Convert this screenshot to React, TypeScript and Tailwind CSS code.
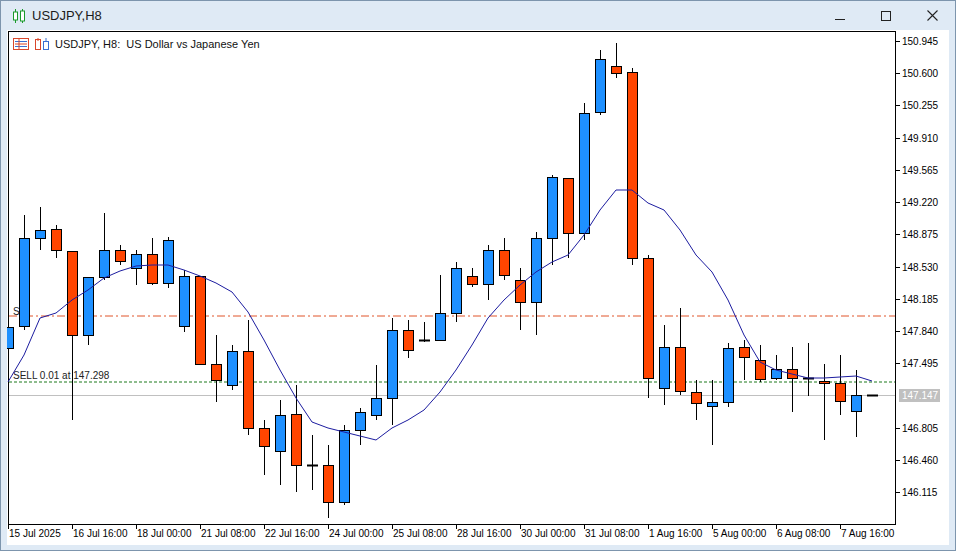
import React from "react";

type C = [number, string, number, number, number, number]; // x, color(b/r/d), bodyTop, bodyBot, wickTop, wickBot
const candles: C[] = [
  [8, "b", 327, 348, 320, 350],
  [24, "b", 238, 326, 215, 330],
  [40, "b", 230, 238, 207, 250],
  [56, "r", 229, 250, 225, 258],
  [72, "r", 251, 335, 251, 420],
  [88, "b", 277, 335, 277, 345],
  [104, "b", 250, 277, 213, 280],
  [120, "r", 250, 261, 245, 265],
  [136, "b", 254, 268, 250, 285],
  [152, "r", 254, 283, 238, 285],
  [168, "b", 240, 283, 237, 288],
  [184, "b", 276, 326, 270, 332],
  [200, "r", 276, 364, 276, 364],
  [216, "r", 364, 380, 335, 402],
  [232, "b", 351, 385, 345, 390],
  [248, "r", 351, 428, 320, 435],
  [264, "r", 428, 446, 420, 475],
  [280, "b", 415, 451, 400, 485],
  [296, "r", 414, 465, 385, 492],
  [312, "d", 465, 465, 435, 490],
  [328, "r", 465, 502, 445, 518],
  [344, "b", 430, 502, 425, 505],
  [360, "b", 412, 430, 408, 445],
  [376, "b", 398, 415, 365, 420],
  [392, "b", 330, 398, 318, 425],
  [408, "r", 330, 350, 320, 358],
  [424, "d", 340, 340, 322, 342],
  [440, "b", 313, 340, 275, 340],
  [456, "b", 268, 313, 262, 322],
  [472, "r", 276, 284, 268, 287],
  [488, "b", 250, 284, 245, 300],
  [504, "r", 250, 275, 238, 280],
  [520, "r", 280, 302, 268, 330],
  [536, "b", 238, 302, 232, 335],
  [552, "b", 177, 238, 175, 265],
  [568, "r", 178, 233, 178, 258],
  [584, "b", 113, 233, 103, 240],
  [600, "b", 59, 112, 50, 115],
  [616, "r", 66, 73, 43, 78],
  [632, "r", 72, 258, 68, 265],
  [648, "r", 258, 378, 255, 398],
  [664, "b", 347, 388, 325, 405],
  [680, "r", 347, 391, 308, 395],
  [696, "r", 392, 403, 380, 420],
  [712, "b", 402, 406, 380, 445],
  [728, "b", 348, 402, 343, 407],
  [744, "r", 347, 357, 340, 380],
  [760, "r", 360, 379, 345, 382],
  [776, "b", 369, 378, 355, 380],
  [792, "r", 369, 378, 347, 412],
  [808, "d", 378, 378, 343, 396],
  [824, "r", 381, 383, 364, 440],
  [840, "r", 383, 401, 355, 415],
  [856, "b", 395, 411, 370, 437],
  [872, "d", 395, 395, 395, 395],
];

const ma = "8,382 24,355 40,318 56,313 72,300 88,290 104,278 120,271 136,266 152,265 168,265 184,270 200,276 216,283 232,292 248,312 264,340 280,370 296,398 312,422 328,428 344,432 360,436 376,440 392,428 408,420 424,410 440,392 456,370 472,345 488,318 504,300 520,285 536,272 552,262 568,255 584,235 600,210 616,190 632,190 648,203 664,210 680,230 696,255 712,272 728,300 744,335 760,362 776,370 792,374 808,378 824,378 840,377 856,376 872,381";

const prices: [string, number][] = [
  ["150.945", 41], ["150.600", 73], ["150.255", 105], ["149.910", 138], ["149.565", 170],
  ["149.220", 202], ["148.875", 234], ["148.530", 267], ["148.185", 299], ["147.840", 331],
  ["147.495", 363], ["146.805", 428], ["146.460", 460], ["146.115", 492],
];
const dates: [string, number][] = [
  ["15 Jul 2025", 8], ["16 Jul 16:00", 72], ["18 Jul 00:00", 136], ["21 Jul 08:00", 200],
  ["22 Jul 16:00", 264], ["24 Jul 00:00", 328], ["25 Jul 08:00", 392], ["28 Jul 16:00", 456],
  ["30 Jul 00:00", 520], ["31 Jul 08:00", 584], ["1 Aug 16:00", 648], ["5 Aug 00:00", 712],
  ["6 Aug 08:00", 776], ["7 Aug 16:00", 840],
];

export default function App() {
  return (
    <div className="w-[956px] h-[551px] bg-[#dfeaf5] border border-[#7d95ad] flex flex-col" style={{ fontFamily: "'Liberation Sans', Arial, sans-serif" }}>
      <div className="h-[29px] flex items-center pl-[11px] shrink-0">
        <svg width="14" height="16" viewBox="0 0 14 16" className="mr-[6px]">
          <line x1="3.5" y1="1" x2="3.5" y2="15" stroke="#1a9a2a" />
          <rect x="1.5" y="4" width="4" height="8" fill="#fff" stroke="#1a9a2a" />
          <line x1="10.5" y1="1" x2="10.5" y2="15" stroke="#1a9a2a" />
          <rect x="8.5" y="3" width="4" height="10" fill="#fff" stroke="#1a9a2a" />
        </svg>
        <span className="text-[13px] text-[#1b1b1b]">USDJPY,H8</span>
        <div className="ml-auto flex items-center">
          <span className="w-[46px] flex justify-center"><span className="block w-[10px] h-px bg-[#222] mt-[8px]" /></span>
          <span className="w-[46px] flex justify-center"><span className="block w-[10px] h-[10px] border border-[#222]" /></span>
          <span className="w-[46px] flex justify-center">
            <svg width="11" height="11" viewBox="0 0 11 11"><path d="M0.5 0.5L10.5 10.5M10.5 0.5L0.5 10.5" stroke="#222" strokeWidth="1.1" /></svg>
          </span>
        </div>
      </div>
      <div className="relative mx-[6px] h-[515px] bg-white">
        <svg className="absolute inset-0" width="941" height="515" viewBox="7 30 941 515" style={{ fontFamily: "'Liberation Sans', Arial, sans-serif" }}>
          {/* axis box */}
          <rect x="8.5" y="31.5" width="887" height="493" fill="none" stroke="#000" />
          {/* level lines */}
          <line x1="9" y1="316" x2="895" y2="316" stroke="#e0552a" strokeDasharray="8 3 2 3" />
          <line x1="9" y1="382" x2="895" y2="382" stroke="#1d7a1d" strokeDasharray="3 2" />
          <line x1="9" y1="395.5" x2="895" y2="395.5" stroke="#c0c0c0" />
          <text x="13" y="315" fontSize="10" fill="#222">S</text>
          <text x="13" y="379" fontSize="10" fill="#222">SELL 0.01 at 147.298</text>
          {/* candles */}
          {candles.map(([x, c, bt, bb, wt, wb], i) => (
            <g key={i}>
              <line x1={x + 0.5} y1={wt} x2={x + 0.5} y2={wb} stroke="#000" />
              {c === "d" ? (
                <line x1={x - 5} y1={bt + 0.5} x2={x + 6} y2={bt + 0.5} stroke="#000" strokeWidth="2" />
              ) : (
                <rect x={x - 4.5} y={bt + 0.5} width="10" height={Math.max(bb - bt, 2)} fill={c === "b" ? "#1e90ff" : "#ff4500"} stroke="#000" />
              )}
            </g>
          ))}
          <polyline points={ma} fill="none" stroke="#1c1ca0" strokeWidth="1" />
          {/* price axis */}
          {prices.map(([t, y]) => (
            <g key={t}>
              <line x1="895" y1={y + 0.5} x2="900" y2={y + 0.5} stroke="#000" />
              <text x="902" y={y + 4} fontSize="10" fill="#000">{t}</text>
            </g>
          ))}
          <rect x="899" y="389" width="41" height="13" fill="#c0c0c0" />
          <text x="902" y="399" fontSize="10" fill="#fff">147.147</text>
          {/* time axis */}
          {dates.map(([t, x]) => (
            <g key={t}>
              <line x1={x + 0.5} y1="524" x2={x + 0.5} y2="529" stroke="#000" />
              <text x={x + 1} y="537" fontSize="10" fill="#000">{t}</text>
            </g>
          ))}
        </svg>
        <div className="absolute left-[6px] top-[6px] flex items-center gap-[5px] text-[11px] text-[#111]">
          <svg width="16" height="12" viewBox="0 0 16 12">
            <rect x="0.5" y="0.5" width="15" height="11" fill="#fff" stroke="#d9472b" />
            <line x1="2" y1="3.5" x2="14" y2="3.5" stroke="#3b6fd1" />
            <line x1="2" y1="6" x2="14" y2="6" stroke="#d9472b" />
            <line x1="2" y1="8.5" x2="14" y2="8.5" stroke="#3b6fd1" />
            <line x1="6" y1="1" x2="6" y2="11" stroke="#d9472b" />
          </svg>
          <svg width="16" height="13" viewBox="0 0 16 13">
            <rect x="1.5" y="1.5" width="5" height="10" fill="#fff" stroke="#d9472b" />
            <rect x="9.5" y="3.5" width="5" height="8" fill="#fff" stroke="#3b6fd1" />
            <line x1="4" y1="0" x2="4" y2="3" stroke="#d9472b" />
            <line x1="12" y1="0" x2="12" y2="4" stroke="#3b6fd1" />
          </svg>
          <span>USDJPY, H8:&nbsp; US Dollar vs Japanese Yen</span>
        </div>
      </div>
    </div>
  );
}
